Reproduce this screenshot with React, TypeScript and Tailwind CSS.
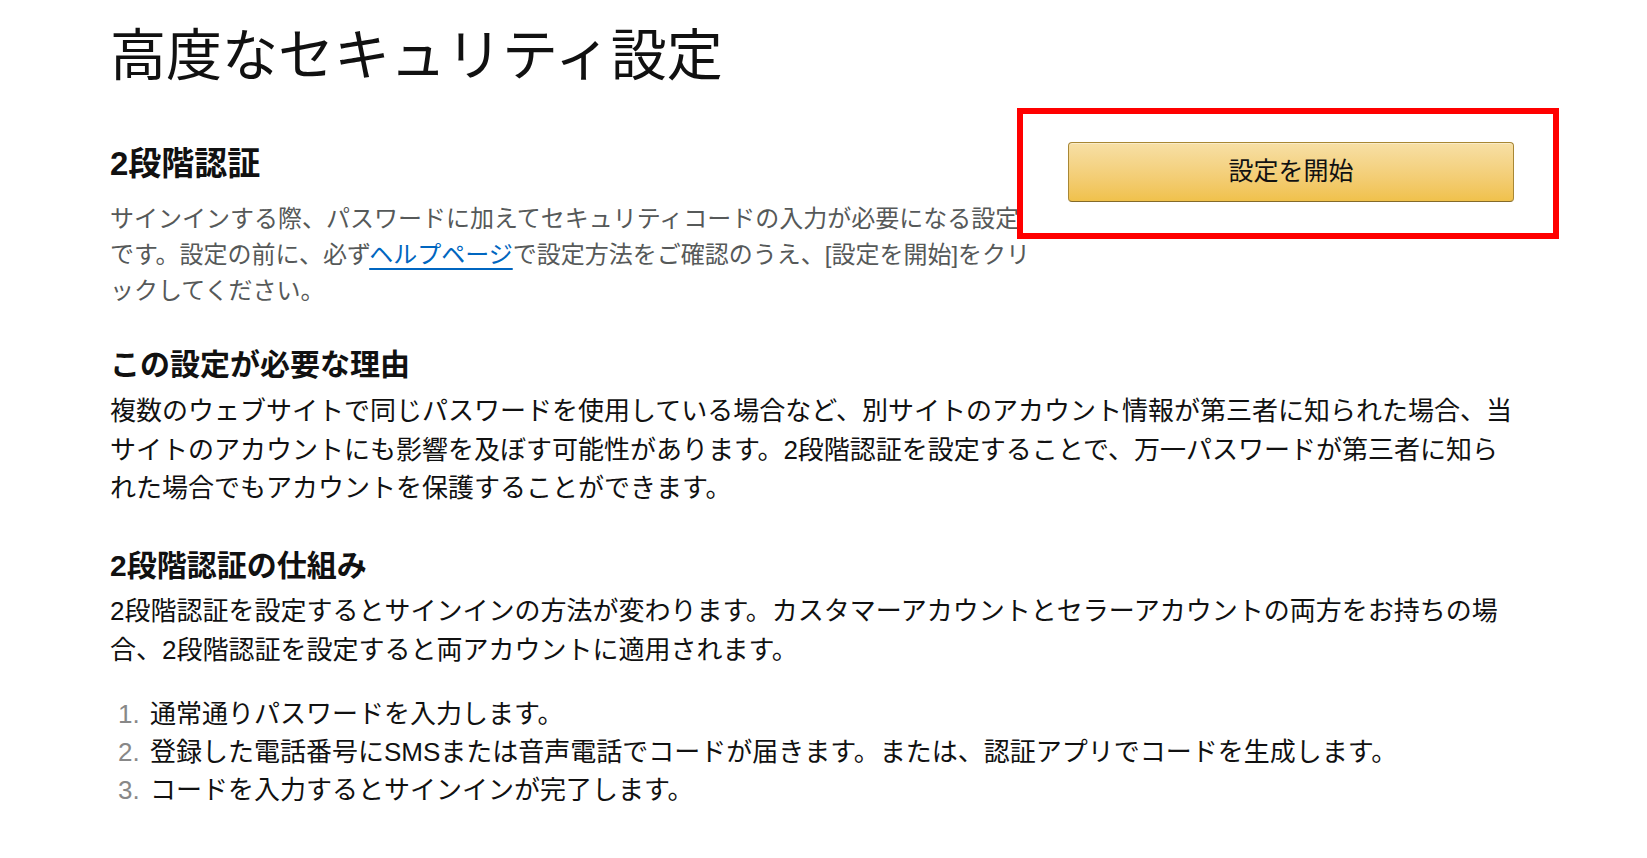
import React from 'react';

const jp = "font-['Liberation_Sans','Noto_Sans_CJK_JP',sans-serif]";

const steps = [
  '通常通りパスワードを入力します。',
  '登録した電話番号にSMSまたは音声電話でコードが届きます。または、認証アプリでコードを生成します。',
  'コードを入力するとサインインが完了します。',
];

export default function App() {
  return (
    <div className={`${jp} min-h-screen bg-white pl-[110px] pt-[22px] text-[#111]`}>
      <h1 className="text-[56px] leading-[67px] font-normal">高度なセキュリティ設定</h1>

      {/* 2段階認証 + button */}
      <div className="mt-[19px] flex items-start">
        <div className="w-[907px] flex-none pt-[36px]">
          <h2 className="text-[33px] leading-[40px] font-bold">2段階認証</h2>
          <p className="mt-[17px] whitespace-nowrap text-[24px] leading-[36px] text-[#565959]">
            サインインする際、パスワードに加えてセキュリティコードの入力が必要になる設定
            <br />
            です。設定の前に、必ず
            <a href="#" className="text-[#0066c0] underline underline-offset-[5px]">ヘルプページ</a>
            で設定方法をご確認のうえ、[設定を開始]をクリ
            <br />
            ックしてください。
          </p>
        </div>
        <div className="relative z-10 border-[6px] border-[#ff0000] pt-[28px] pr-[39px] pb-[31px] pl-[45px]">
          <button className="flex h-[60px] w-[446px] items-center justify-center rounded-[4px] border border-[#a88734] border-b-[#846a29] bg-gradient-to-b from-[#f7dfa5] to-[#f0c14b] text-[25px] text-[#111] shadow-[inset_0_1px_0_rgba(255,255,255,0.4)]">
            設定を開始
          </button>
        </div>
      </div>

      {/* 理由 */}
      <h3 className="mt-[37px] text-[30px] leading-[38px] font-bold">この設定が必要な理由</h3>
      <p className="mt-[8px] whitespace-nowrap text-[26px] leading-[38.5px]">
        複数のウェブサイトで同じパスワードを使用している場合など、別サイトのアカウント情報が第三者に知られた場合、当
        <br />
        サイトのアカウントにも影響を及ぼす可能性があります。2段階認証を設定することで、万一パスワードが第三者に知ら
        <br />
        れた場合でもアカウントを保護することができます。
      </p>

      {/* 仕組み */}
      <h3 className="mt-[39px] text-[30px] leading-[38px] font-bold">2段階認証の仕組み</h3>
      <p className="mt-[7px] whitespace-nowrap text-[26px] leading-[39px]">
        2段階認証を設定するとサインインの方法が変わります。カスタマーアカウントとセラーアカウントの両方をお持ちの場
        <br />
        合、2段階認証を設定すると両アカウントに適用されます。
      </p>

      <ol className="mt-[25px] text-[26px] leading-[38px]">
        {steps.map((s, i) => (
          <li key={i} className="flex whitespace-nowrap">
            <span className="w-[40px] flex-none pl-[8px] text-[#888]">{i + 1}.</span>
            <span>{s}</span>
          </li>
        ))}
      </ol>
    </div>
  );
}
